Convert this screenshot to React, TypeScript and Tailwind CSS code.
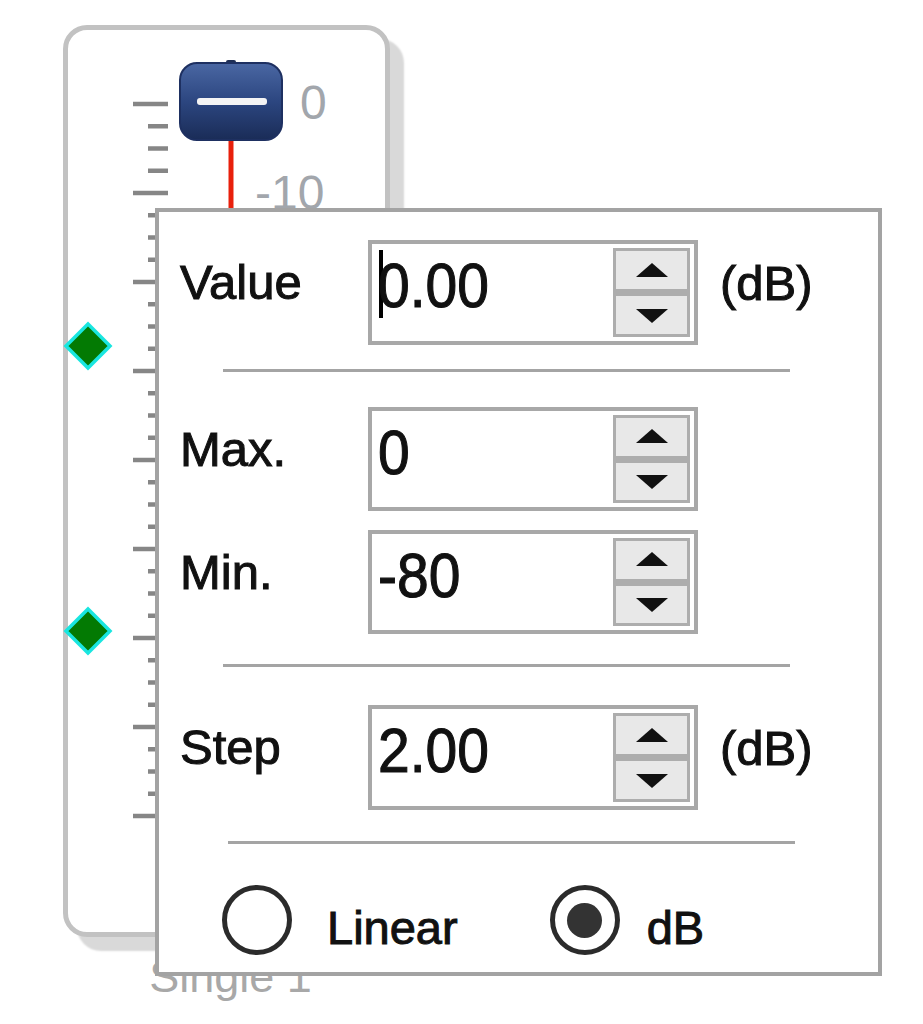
const ticks = () => {
  const out: JSX.Element[] = []
  for (let k = 0; k <= 8; k++) {
    const y = 74 + 89 * k
    out.push(<line key={'l' + k} x1={65} x2={100} y1={y} y2={y} stroke="#868686" strokeWidth={4.5} />)
    if (k < 8) {
      for (let j = 1; j <= 3; j++) {
        const ys = y + 22.25 * j
        out.push(<line key={'s' + k + j} x1={80} x2={100} y1={ys} y2={ys} stroke="#868686" strokeWidth={4.5} />)
      }
    }
  }
  return out
}

const Arrow = ({ down }: { down?: boolean }) => (
  <svg width="32" height="15" viewBox="0 0 32 15">
    <polygon points={down ? '0,1 32,1 16,15' : '16,0 32,14 0,14'} fill="#111" />
  </svg>
)

const Spin = ({ value, caret }: { value: string; caret?: boolean }) => (
  <div className="relative flex h-full w-[330px] border-[4px] border-[#a8a8a8] bg-white">
    {caret && <span className="absolute left-[7px] top-[6px] h-[68px] w-[4px] bg-black" />}
    <span className="mb-[14px] self-center pl-[6px] text-[57px] leading-none text-[#111] scale-y-112 [-webkit-text-stroke:1px_#111]">{value}</span>
    <div className="my-[4px] ml-auto mr-[4px] flex w-[77px] flex-col">
      <div className="flex flex-1 items-center justify-center border-[3px] border-[#adadad] bg-[#e8e8e8]">
        <Arrow />
      </div>
      <div className="flex flex-1 items-center justify-center border-[3px] border-t-[4px] border-[#adadad] bg-[#e8e8e8]">
        <Arrow down />
      </div>
    </div>
  </div>
)

const Row = ({ label, value, unit, caret, h = 'h-[105px]', mt }: { label: string; value: string; unit?: boolean; caret?: boolean; h?: string; mt: string }) => (
  <div className={`flex items-center ${h} ${mt}`}>
    <span className="mb-[20px] w-[188px] text-[49px] leading-none text-[#111] [-webkit-text-stroke:1px_#111]">{label}</span>
    <Spin value={value} caret={caret} />
    {unit && <span className="mb-[18px] ml-[22px] text-[49px] leading-none text-[#111] [-webkit-text-stroke:1px_#111]">(dB)</span>}
  </div>
)

const App = () => {
  return (
    <div className="relative h-[1024px] w-[923px] overflow-hidden bg-white pl-[63px] pt-[25px] font-['Liberation_Sans',Arial,sans-serif]">
      {/* fader strip */}
      <div className="relative h-[912px] w-[327px] rounded-[24px] border-[5px] border-[#c2c2c2] bg-white shadow-[14px_14px_2px_#d9d9d9]">
        <svg className="absolute left-0 top-0 overflow-visible" width="317" height="902">
          <defs>
            <linearGradient id="knob" x1="0" y1="0" x2="0" y2="1">
              <stop offset="0" stopColor="#4a67a3" />
              <stop offset="0.5" stopColor="#2c4680" />
              <stop offset="1" stopColor="#1a2c57" />
            </linearGradient>
          </defs>
          {ticks()}
          <line x1={163} x2={163} y1={108} y2={200} stroke="#e8200c" strokeWidth={5} />
          <rect x={158} y={30} width={10} height={5} rx={2} fill="#1f2f55" />
          <rect x={112} y={33} width={102} height={77} rx={17} fill="url(#knob)" stroke="#1e3061" strokeWidth={2} />
          <rect x={129} y={68} width={70} height={7} rx={3} fill="#f4f4f4" />
          <polygon points="20,294 42,316 20,338 -2,316" fill="#037a03" stroke="#19e6e0" strokeWidth={3.5} />
          <polygon points="20,579 42,601 20,623 -2,601" fill="#037a03" stroke="#19e6e0" strokeWidth={3.5} />
        </svg>
        <span className="absolute left-[232px] top-[49px] text-[48px] leading-none text-[#a2a6ac]">0</span>
        <span className="absolute left-[187px] top-[139px] text-[48px] leading-none text-[#a2a6ac]">-10</span>
      </div>
      <div className="mt-[17px] w-[327px] pl-[8px] text-center text-[45px] leading-none text-[#a8a8a8]">Single 1</div>

      {/* settings popup */}
      <div className="absolute left-[155px] top-[208px] flex h-[768px] w-[727px] flex-col border-[4px] border-[#a3a3a3] bg-white pl-[21px]">
        <Row label="Value" value="0.00" unit caret mt="mt-[28px]" />
        <div className="ml-[43px] mt-[24px] h-[3px] w-[567px] bg-[#a4a4a4]" />
        <Row label="Max." value="0" h="h-[104px]" mt="mt-[35px]" />
        <Row label="Min." value="-80" h="h-[104px]" mt="mt-[19px]" />
        <div className="ml-[43px] mt-[30px] h-[3px] w-[567px] bg-[#a4a4a4]" />
        <Row label="Step" value="2.00" unit mt="mt-[38px]" />
        <div className="ml-[48px] mt-[31px] h-[3px] w-[567px] bg-[#a4a4a4]" />
        <div className="ml-[42px] mt-[41px] flex h-[70px] items-center">
          <div className="h-[70px] w-[70px] rounded-full border-[5px] border-[#2b2b2b]" />
          <span className="ml-[35px] mt-[14px] text-[47px] leading-none text-[#111] [-webkit-text-stroke:1px_#111]">Linear</span>
          <div className="ml-[92px] flex h-[70px] w-[70px] items-center justify-center rounded-full border-[5px] border-[#2b2b2b]">
            <div className="h-[35px] w-[35px] rounded-full bg-[#333]" />
          </div>
          <span className="ml-[27px] mt-[14px] text-[47px] leading-none text-[#111] [-webkit-text-stroke:1px_#111]">dB</span>
        </div>
      </div>
    </div>
  )
}

export default App
